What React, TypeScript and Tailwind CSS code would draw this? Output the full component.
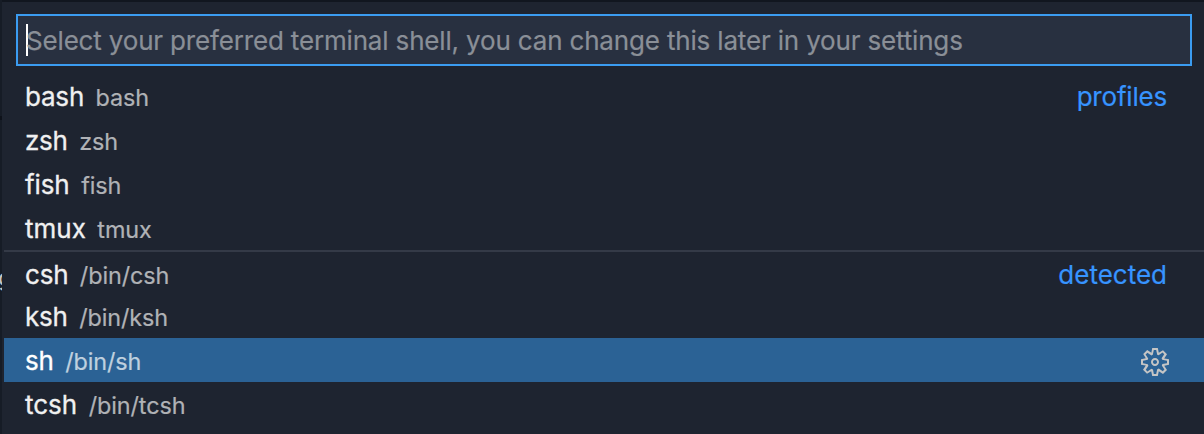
import { VscGear } from "react-icons/vsc";

type Shell = { label: string; description: string; group?: string; active?: boolean; row: string; tracking: string };

const shells: Shell[] = [
  { label: "bash", description: "bash", group: "profiles", row: "h-11", tracking: "tracking-[-0.2px]" },
  { label: "zsh", description: "zsh", row: "h-11", tracking: "tracking-[-0.25px]" },
  { label: "fish", description: "fish", row: "h-11", tracking: "tracking-[-0.1px]" },
  { label: "tmux", description: "tmux", row: "h-11", tracking: "tracking-normal" },
  { label: "csh", description: "/bin/csh", group: "detected", row: "h-11 border-t-2 border-[#343a47] pt-[2px]", tracking: "tracking-[-0.2px]" },
  { label: "ksh", description: "/bin/ksh", row: "h-11", tracking: "tracking-[-0.25px]" },
  { label: "sh", description: "/bin/sh", active: true, row: "h-11 bg-[#2b6295]", tracking: "tracking-[-0.2px]" },
  { label: "tcsh", description: "/bin/tcsh", row: "h-11", tracking: "tracking-normal" },
];

function ShellRow({ shell }: { shell: Shell }) {
  return (
    <li className={`flex items-center justify-between pl-[21px] pr-[37px] ${shell.row}`}>
      <div className="flex items-baseline gap-[11.5px] pt-[2px] leading-[44px]">
        <span className={`text-[26px] [-webkit-text-stroke:0.3px] ${shell.tracking} ${shell.active ? "text-white" : "text-[#f0f0f0]"}`}>{shell.label}</span>
        <span className={`text-[23.4px] tracking-[-0.1px] [-webkit-text-stroke:0.2px] ${shell.active ? "text-[#bfd0df]" : "text-[#b0b2b6]"}`}>{shell.description}</span>
      </div>
      {shell.group && (
        <span className={`pt-[2px] text-[26px] leading-[44px] text-[#3794ff] [-webkit-text-stroke:0.2px] ${shell.group === "profiles" ? "tracking-[-0.2px]" : "tracking-normal"}`}>
          {shell.group}
        </span>
      )}
      {shell.active && <VscGear className="-mr-1 mt-1 size-8 text-[#c5c5c5]" />}
    </li>
  );
}

export default function App() {
  return (
    <div className="flex h-[434px] w-[1204px] overflow-hidden bg-[#11161f] font-['Inter',sans-serif]">
      <div className="flex w-[2px] shrink-0 flex-col overflow-hidden bg-[#161c26]">
        <div className="mt-[116px] h-1 shrink-0 bg-[#0e121a]" />
        <span className="-ml-[2px] mt-[142px] text-[24px] leading-[32px] text-[#c5c5c5]">g</span>
      </div>
      <main className="mt-[2px] flex min-w-0 flex-1 flex-col bg-[#1e2430] pl-[2px]">
        <div className="ml-3 mr-3 mt-3 flex h-[52px] shrink-0 items-center border-2 border-[#3b9cf1] bg-[#283040] pl-2">
          <span className="h-8 w-[2px] shrink-0 bg-white" />
          <span className="-ml-[2px] whitespace-nowrap pt-[2px] text-[26px] leading-8 tracking-[-0.168px] text-[#8a8f97] [-webkit-text-stroke:0.2px]">
            Select your preferred terminal shell, you can change this later in your settings
          </span>
        </div>
        <ul className="mt-2">
          {shells.map((shell) => (
            <ShellRow key={shell.label} shell={shell} />
          ))}
        </ul>
      </main>
    </div>
  );
}
